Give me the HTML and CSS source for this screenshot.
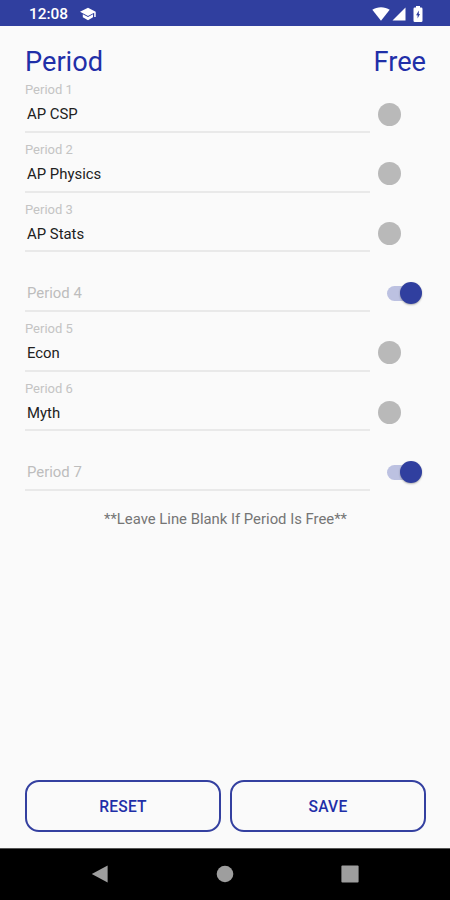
FILE: index.html
```html
<!DOCTYPE html>
<html lang="en">
<head>
    <meta charset="UTF-8">
    <meta name="viewport" content="width=device-width, initial-scale=1.0">
    <title>Class Periods</title>
    <link rel="stylesheet" href="styles.css">
</head>
<body>
    <div class="phone">
        <header class="status-bar">
            <span class="clock">12:08</span>
            <svg class="icon-cap" width="16" height="14" viewBox="0 0 16 14">
                <path d="M8 0.8L0 4.8L8 9L14.2 5.7V10H15.7V4.8Z" fill="#fff"/>
                <path d="M2.8 7.2V10.3L8 13.2L13 10.3V7.2L8 9.9Z" fill="#fff"/>
            </svg>
            <div class="status-icons">
                <svg width="18" height="14" viewBox="0 0 18 14">
                    <path d="M0.3 2.8C5 -0.6 13 -0.6 17.7 2.8L9 13.8Z" fill="#fff"/>
                </svg>
                <svg width="14" height="14" viewBox="0 0 14 14">
                    <path d="M13.5 0.5V13.5H0.5Z" fill="#fff"/>
                </svg>
                <svg class="icon-battery" width="10" height="16" viewBox="0 0 10 16">
                    <path d="M3 0H7V1.6H8.2Q9.5 1.6 9.5 2.9V14.7Q9.5 16 8.2 16H1.8Q0.5 16 0.5 14.7V2.9Q0.5 1.6 1.8 1.6H3Z" fill="#fff"/>
                    <path d="M5.8 4.4L3.1 9.2H4.6V12.6L7 7.9H5.8Z" fill="#303f9f"/>
                </svg>
            </div>
        </header>

        <main class="content">
            <div class="heading">
                <h1>Period</h1>
                <h1>Free</h1>
            </div>

            <div class="periods">
                <div class="period-row">
                    <div class="field"><div class="label">Period 1</div><div class="value">AP CSP</div></div>
                    <div class="switch"><div class="thumb"></div></div>
                </div>
                <div class="period-row">
                    <div class="field"><div class="label">Period 2</div><div class="value">AP Physics</div></div>
                    <div class="switch"><div class="thumb"></div></div>
                </div>
                <div class="period-row">
                    <div class="field"><div class="label">Period 3</div><div class="value">AP Stats</div></div>
                    <div class="switch"><div class="thumb"></div></div>
                </div>
                <div class="period-row">
                    <div class="field"><div class="value placeholder">Period 4</div></div>
                    <div class="switch on"><div class="thumb"></div></div>
                </div>
                <div class="period-row">
                    <div class="field"><div class="label">Period 5</div><div class="value">Econ</div></div>
                    <div class="switch"><div class="thumb"></div></div>
                </div>
                <div class="period-row">
                    <div class="field"><div class="label">Period 6</div><div class="value">Myth</div></div>
                    <div class="switch"><div class="thumb"></div></div>
                </div>
                <div class="period-row">
                    <div class="field"><div class="value placeholder">Period 7</div></div>
                    <div class="switch on"><div class="thumb"></div></div>
                </div>
            </div>

            <p class="note">**Leave Line Blank If Period Is Free**</p>

            <div class="actions">
                <button class="btn">RESET</button>
                <button class="btn">SAVE</button>
            </div>
        </main>

        <nav class="nav-bar">
            <svg width="18" height="18" viewBox="0 0 18 18"><path d="M16.6 0.6V17.6L0.8 9.1Z" fill="#9e9e9e"/></svg>
            <svg width="18" height="18" viewBox="0 0 18 18"><circle cx="9" cy="9" r="8.3" fill="#9e9e9e"/></svg>
            <svg width="18" height="18" viewBox="0 0 18 18"><rect x="0.4" y="0.4" width="17.2" height="17.2" rx="1" fill="#9e9e9e"/></svg>
        </nav>
    </div>
</body>
</html>
```
FILE: styles.css
```css
:root {
    --primary: #303f9f;
    --text-blue: #1f2fa8;
    --background: #fafafa;
    --hint: #c4c4c4;
    --line: #e9e9e9;
}

* { box-sizing: border-box; }

body {
    margin: 0;
    font-family: Roboto, sans-serif;
    background: var(--background);
}

.phone { width: 450px; height: 900px; display: flex; flex-direction: column; overflow: hidden; }

/* --- Status bar --- */
.status-bar {
    height: 26px;
    flex-shrink: 0;
    display: flex;
    align-items: center;
    padding: 2px 27px 0 29px;
    background: var(--primary);
    color: #fff;
}
.clock { font-size: 15.4px; font-weight: 500; line-height: 24px; }
.icon-cap { margin-left: 12px; }
.status-icons { margin-left: auto; display: flex; align-items: center; gap: 2px; }
.icon-battery { margin-left: 5px; }

/* --- Form --- */
.content { flex: 1; display: flex; flex-direction: column; padding: 21px 24px 16px 25px; }
.heading { display: flex; justify-content: space-between; height: 26.4px; }
h1 { margin: 0; font-size: 27.2px; font-weight: 400; line-height: 30px; color: var(--text-blue); }

.period-row { display: flex; height: 59.65px; }
.field {
    width: 345px;
    display: flex;
    flex-direction: column;
    justify-content: flex-end;
    border-bottom: 2px solid var(--line);
}
.label { font-size: 13px; line-height: 16px; color: var(--hint); }
.value { font-size: 14.9px; line-height: 18px; padding: 7px 0 7.6px 2px; color: #212121; }
.placeholder { color: #bdbdbd; }

.switch { width: 56px; display: flex; align-items: center; padding: 22px 0 0 8px; }
.thumb { width: 23px; height: 23px; border-radius: 50%; background: #b9b9b9; }
.switch.on { padding-left: 17px; }
.switch.on::before { content: ""; width: 25px; height: 15px; border-radius: 8px; background: #bcc1e1; }
.switch.on .thumb { margin-left: -12px; width: 22px; height: 22px; background: var(--primary); box-shadow: 0 1px 2px rgba(0,0,0,0.3); }

.note { margin: 18px 0 0; font-size: 14.85px; line-height: 20px; text-align: center; color: #757575; }

/* --- Buttons --- */
.actions { display: flex; gap: 9px; margin-top: auto; }
.btn {
    flex: 1;
    height: 52px;
    padding: 2px 0 0;
    background: transparent;
    border: 2px solid #3440a0;
    border-radius: 14px;
    font-family: inherit;
    font-size: 15.6px;
    font-weight: 500;
    letter-spacing: 0.2px;
    color: var(--text-blue);
}

/* --- Navigation bar --- */
.nav-bar {
    height: 52px;
    flex-shrink: 0;
    display: flex;
    justify-content: space-between;
    align-items: center;
    padding: 0 91px 1px;
    background: #000;
    border-top: 1px solid #555;
}
```
